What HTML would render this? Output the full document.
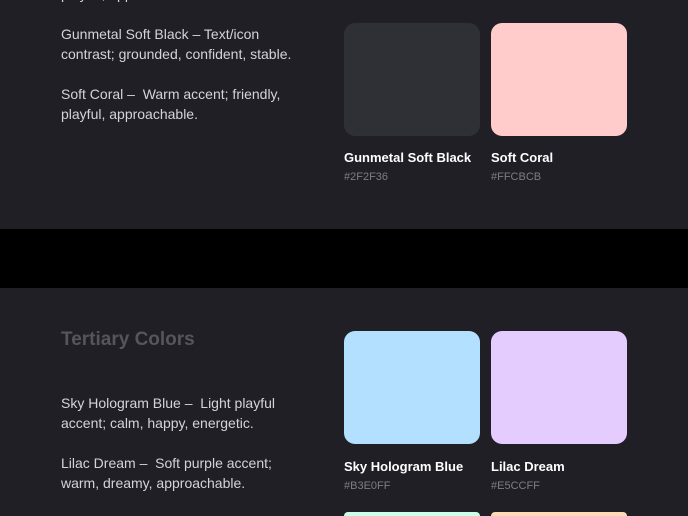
<!DOCTYPE html>
<html><head><style>
*{margin:0;padding:0;box-sizing:border-box}
html,body{width:688px;height:516px;overflow:hidden}
body{background:#000;font-family:"Liberation Sans",sans-serif;position:relative}
.sec{position:absolute;left:0;width:688px;background:#1f1f25;overflow:hidden}
.t{position:absolute;color:#d4d4d8;font-size:14px;line-height:20px;left:61px}
.sw{position:absolute;width:136px;height:113px;border-radius:11px}
.n{position:absolute;color:#fff;font-weight:bold;font-size:13px}
.h{position:absolute;color:#7d7d85;font-size:11px}
</style></head><body>
<div class="sec" style="top:0;height:229px">
<div class="t" style="top:-16px">playful, approachable.</div>
<div class="h" style="left:344px;top:-10px">#D3D3D3</div>
<div class="h" style="left:491px;top:-10px">#FFFFFF</div>
<div class="t" style="top:24px">Gunmetal Soft Black – Text/icon<br>contrast; grounded, confident, stable.</div>
<div class="t" style="top:84px">Soft Coral –&nbsp; Warm accent; friendly,<br>playful, approachable.</div>
<div class="sw" style="left:344px;top:23px;background:#2f2f36"></div>
<div class="sw" style="left:491px;top:23px;background:#ffcbcb"></div>
<div class="n" style="left:344px;top:150px">Gunmetal Soft Black</div>
<div class="n" style="left:491px;top:150px">Soft Coral</div>
<div class="h" style="left:344px;top:171px">#2F2F36</div>
<div class="h" style="left:491px;top:171px">#FFCBCB</div>
</div>
<div class="sec" style="top:288px;height:228px">
<div class="t" style="top:40px;font-size:19px;line-height:24px;color:#55555c;font-weight:bold">Tertiary Colors</div>
<div class="t" style="top:105px">Sky Hologram Blue –&nbsp; Light playful<br>accent; calm, happy, energetic.</div>
<div class="t" style="top:165px">Lilac Dream –&nbsp; Soft purple accent;<br>warm, dreamy, approachable.</div>
<div class="sw" style="left:344px;top:43px;background:#b3e0ff"></div>
<div class="sw" style="left:491px;top:43px;background:#e5ccff"></div>
<div class="n" style="left:344px;top:171px">Sky Hologram Blue</div>
<div class="n" style="left:491px;top:171px">Lilac Dream</div>
<div class="h" style="left:344px;top:192px">#B3E0FF</div>
<div class="h" style="left:491px;top:192px">#E5CCFF</div>
<div class="sw" style="left:344px;top:224px;height:4px;border-radius:11px 11px 0 0;background:#ccffe9"></div>
<div class="sw" style="left:491px;top:224px;height:4px;border-radius:11px 11px 0 0;background:#ffd9b8"></div>
</div>
</body></html>
